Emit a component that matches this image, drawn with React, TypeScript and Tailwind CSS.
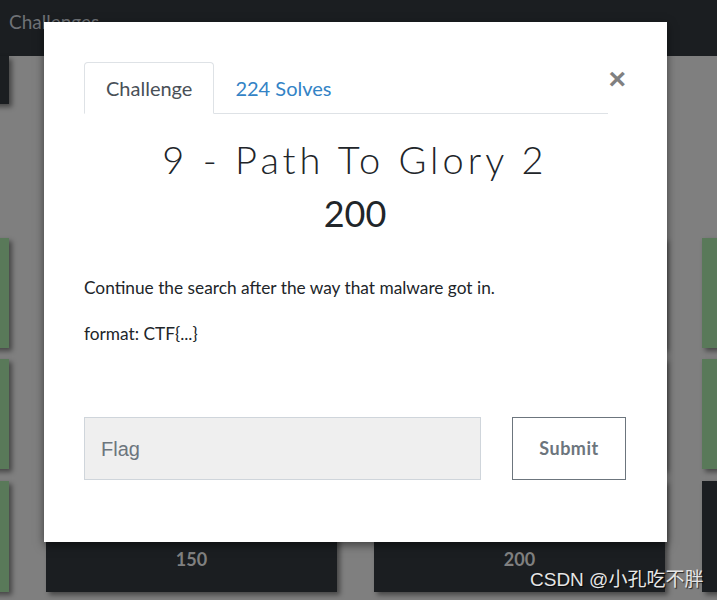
import React from "react";

const Card = ({ kind, label }: { kind: "green" | "dark" | "none"; label?: string }) => {
  if (kind === "none") return <div className="w-[291px] shrink-0" />;
  return (
    <div
      className={
        "w-[291px] shrink-0 h-full flex items-start justify-center shadow-[3px_3px_5px_rgba(0,0,0,0.45)] " +
        (kind === "green" ? "bg-[#597959]" : "bg-[#1b1e21]")
      }
    >
      {label ? (
        <span className="mt-[69px] text-[18px] font-bold text-[#808080] leading-none [font-family:Lato,'Liberation_Sans',sans-serif]">
          {label}
        </span>
      ) : null}
    </div>
  );
};

export default function App() {
  return (
    <div className="relative w-[717px] h-[600px] overflow-hidden bg-[#7f7f7f] [font-family:Lato,'Liberation_Sans',sans-serif]">
      {/* navbar */}
      <div className="h-[56px] bg-[#1b1e21] flex items-start pl-[9px] pt-[12px]">
        <span className="text-[19px] text-[#6f7276] leading-none">Challenges</span>
      </div>

      {/* background cards */}
      <div className="ml-[-282px] flex flex-col">
        <div className="flex gap-[37px] h-[48px]">
          <Card kind="dark" />
          <Card kind="none" />
          <Card kind="none" />
          <Card kind="none" />
        </div>
        <div className="flex gap-[37px] h-[110px] mt-[134px]">
          <Card kind="green" />
          <Card kind="green" />
          <Card kind="green" />
          <Card kind="green" />
        </div>
        <div className="flex gap-[37px] h-[110px] mt-[11px]">
          <Card kind="green" />
          <Card kind="green" />
          <Card kind="green" />
          <Card kind="green" />
        </div>
        <div className="flex gap-[37px] h-[111px] mt-[12px]">
          <Card kind="green" />
          <Card kind="dark" label="150" />
          <Card kind="dark" label="200" />
          <Card kind="dark" />
        </div>
      </div>

      {/* modal */}
      <div className="absolute left-[44px] top-[22px] w-[623px] h-[520px] bg-white shadow-[0_3px_9px_rgba(0,0,0,0.5)] pt-[40px] pl-[40px] pr-[41px]">
        <div className="relative">
          <div className="flex w-[524px] border-b border-[#dee2e6] h-[52px]">
            <div className="h-[52px] mb-[-1px] px-[21px] flex items-center border border-[#dee2e6] border-b-white bg-white rounded-t-[4px] text-[20px] text-[#495057]">
              Challenge
            </div>
            <div className="h-[51px] px-[21px] flex items-center text-[20px] text-[#3383c6]">
              224 Solves
            </div>
          </div>
          <span className="absolute right-[0px] top-[2px] text-[30px] font-bold leading-none text-[#808080] [font-family:'Liberation_Sans',Arial,sans-serif]">
            ×
          </span>
        </div>

        <div className="text-center text-[#212529] mt-[22px] text-[38px] leading-[46px] tracking-[4px] font-light">
          9 - Path To Glory 2
        </div>
        <div className="text-center text-[#212529] mt-[8px] text-[36px] leading-[46px] font-normal">
          200
        </div>

        <p className="mt-[40px] text-[17.3px] leading-[24px] text-[#212529]">
          Continue the search after the way that malware got in.
        </p>
        <p className="mt-[22px] text-[17.3px] leading-[24px] text-[#212529]">format: CTF{"{...}"}</p>

        <div className="mt-[71px] flex gap-[31px]">
          <div className="w-[397px] h-[63px] bg-[#efefef] border border-[#cfd5db] flex items-center pl-[16px] text-[20px] text-[#6c757d] [font-family:'Liberation_Sans',Arial,sans-serif]">
            Flag
          </div>
          <div className="w-[114px] h-[63px] border border-[#6c757d] flex items-center justify-center text-[18px] font-bold text-[#6c757d] tracking-[0.5px]">
            Submit
          </div>
        </div>
      </div>

      {/* watermark */}
      <div className="absolute left-[530px] top-[569px] text-[19px] leading-[22px] text-[#e6e6e6] [text-shadow:1px_1px_1px_rgba(0,0,0,0.7)] [font-family:'Liberation_Sans','Noto_Sans_CJK_SC',sans-serif]">
        CSDN @小孔吃不胖
      </div>
    </div>
  );
}
